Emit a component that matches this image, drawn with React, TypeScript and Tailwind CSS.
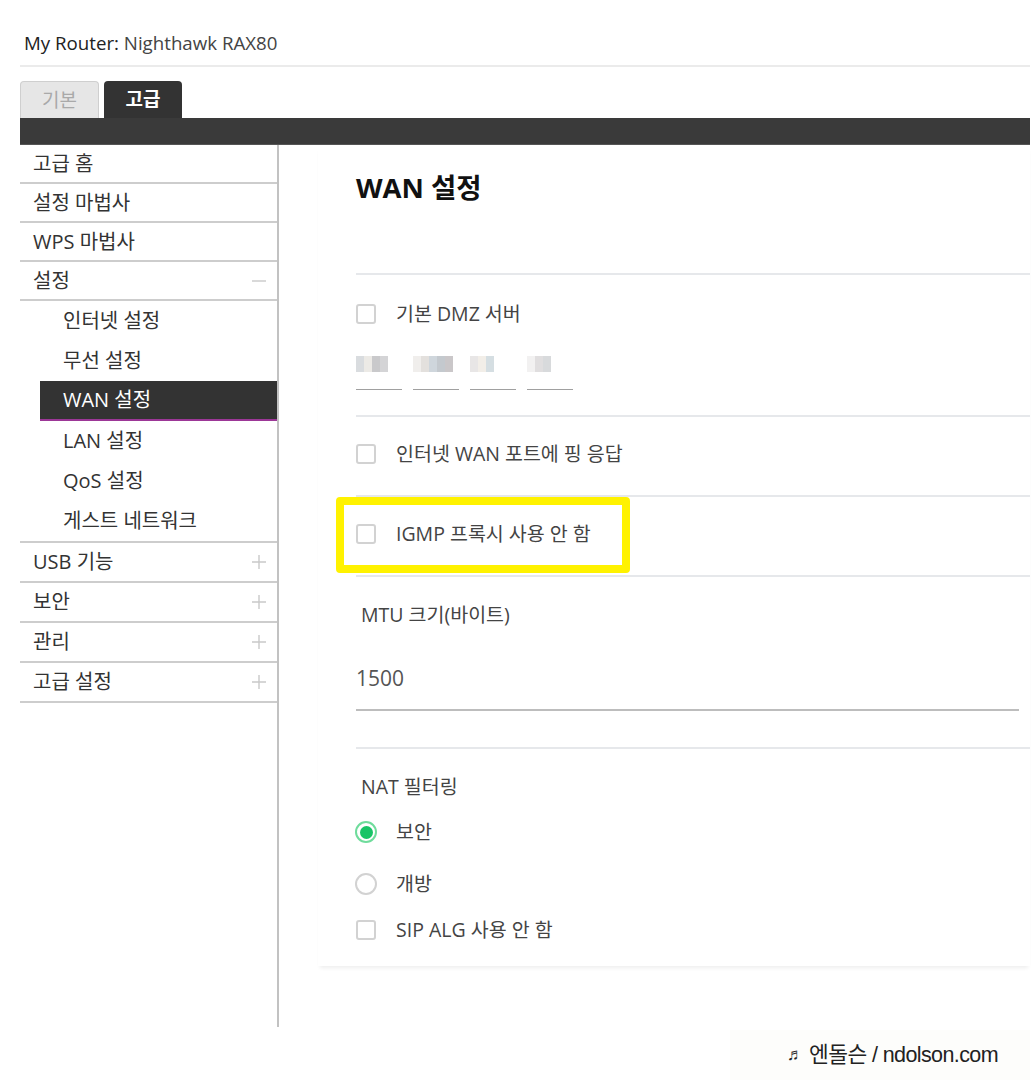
const sans = "font-['Open_Sans','Noto_Sans_CJK_KR',sans-serif]"

const PlusIcon = () => (
  <svg width="16" height="16" viewBox="0 0 16 16">
    <path d="M8 1v14M1 8h14" stroke="#c9c9c9" strokeWidth="1.4" />
  </svg>
)

const MinusIcon = () => (
  <svg width="16" height="16" viewBox="0 0 16 16">
    <path d="M1 8h14" stroke="#c9c9c9" strokeWidth="1.4" />
  </svg>
)

const Checkbox = ({ label }: { label: string }) => (
  <div className="flex h-5 items-center">
    <span className="h-5 w-5 shrink-0 rounded-[3px] border-2 border-[#d2d2d2] bg-white" />
    <span className="ml-5 text-[19.5px] leading-6 text-[#444]">{label}</span>
  </div>
)

const Radio = ({ label, checked }: { label: string; checked?: boolean }) => (
  <div className="flex h-[22px] items-center">
    {checked ? (
      <span className="ml-[-1px] flex h-[22px] w-[22px] items-center justify-center rounded-full border-2 border-[#6fdc9c]">
        <span className="h-[13px] w-[13px] rounded-full bg-[#18c466]" />
      </span>
    ) : (
      <span className="ml-[-1px] h-[22px] w-[22px] rounded-full border-2 border-[#d2d2d2]" />
    )}
    <span className="ml-[19px] text-[19.5px] leading-6 text-[#444]">{label}</span>
  </div>
)

// mosaic blocks standing in for the blurred IP address
const ipBlocks = [
  ['#d9dcdf', '#eceae6', '#c9c9cb', '#d4d4d6'],
  ['#f0eeec', '#e3e0dd', '#cfd6dc', '#c4c9ce', '#cac7c9'],
  ['#e8e6e6', '#f2eee8', '#d5dee2'],
  ['#f2f1f1', '#e0dedf', '#d8dadc'],
]

const topItems = ['고급 홈', '설정 마법사', 'WPS 마법사']
const subItems = ['인터넷 설정', '무선 설정', 'WAN 설정', 'LAN 설정', 'QoS 설정', '게스트 네트워크']
const moreItems = ['USB 기능', '보안', '관리', '고급 설정']

export default function App() {
  return (
    <div className={`relative h-[1080px] w-[1034px] overflow-hidden bg-white pl-5 pr-1 ${sans}`}>
      <div className="border-b-2 border-[#ebebeb] px-1 pb-[11px] pt-[32px] text-[18.7px] leading-[22px]">
        <span className="text-[#222]">My Router:</span>{' '}
        <span className="text-[#444]">Nighthawk RAX80</span>
      </div>

      <div className="mt-[14px] flex h-[37px] items-end gap-[5px]">
        <div className="flex h-[37px] w-[79px] items-center justify-center rounded-t-[4px] border border-b-0 border-[#cfcfcf] bg-[#e6e6e6] text-[19px] text-[#a9a9a9]">
          기본
        </div>
        <div className="flex h-[37px] w-[78px] items-center justify-center rounded-t-[4px] bg-[#333] text-[19px] font-bold text-white">
          고급
        </div>
      </div>
      <div className="h-[27px] border-b border-[#555] bg-[#3a3a3a]" />

      <div className="flex">
        <aside className="h-[882px] w-[259px] shrink-0 border-r-2 border-[#c2c2c2] text-[20px] text-[#333]">
          {topItems.map((item) => (
            <div className="flex h-[39px] items-center border-b-2 border-[#cdcdcd] pl-[13px]" key={item}>
              {item}
            </div>
          ))}
          <div className="flex h-[39px] items-center justify-between border-b-2 border-[#cdcdcd] pl-[13px] pr-[10px]">
            설정
            <MinusIcon />
          </div>
          <div className="border-b-2 border-[#cdcdcd]">
            {subItems.map((item) =>
              item === 'WAN 설정' ? (
                <div
                  className="ml-5 flex h-[40px] items-center border-b-2 border-[#9c3797] bg-[#333] pl-[23px] text-white"
                  key={item}
                >
                  {item}
                </div>
              ) : (
                <div className="ml-5 flex h-[40px] items-center pl-[23px]" key={item}>
                  {item}
                </div>
              ),
            )}
          </div>
          {moreItems.map((item) => (
            <div
              className="flex h-[40px] items-center justify-between border-b-2 border-[#cdcdcd] pl-[13px] pr-[10px]"
              key={item}
            >
              {item}
              <PlusIcon />
            </div>
          ))}
        </aside>

        <main className="flex-1 pl-[39px]">
          <div className="pl-[38px] shadow-[0_4px_4px_-2px_rgba(0,0,0,0.07)]">
            <h1 className="h-[128px] pt-[27px] text-[27.5px] font-bold leading-[32px] text-[#111]">WAN 설정</h1>

            <section className="h-[142px] border-t-2 border-[#e6e8eb] pt-[29px]">
              <Checkbox label="기본 DMZ 서버" />
              <div className="mt-[29px] flex gap-[11px]">
                {ipBlocks.map((blocks, i) => (
                  <div className="h-[37px] w-[46px] border-b border-[#a0a0a0] pt-[3px]" key={i}>
                    <div className="flex">
                      {blocks.map((color, j) => (
                        <span className="h-[16px] w-[8px]" key={j} style={{ backgroundColor: color }} />
                      ))}
                    </div>
                  </div>
                ))}
              </div>
            </section>

            <section className="h-[80px] border-t-2 border-[#e6e8eb] pt-[27px]">
              <Checkbox label="인터넷 WAN 포트에 핑 응답" />
            </section>

            <section className="relative h-[80px] border-t-2 border-[#e6e8eb] pt-[27px]">
              <Checkbox label="IGMP 프록시 사용 안 함" />
              <div className="absolute left-[-20px] top-0 h-[76px] w-[294px] rounded-[4px] border-[8px] border-[#fff200]" />
            </section>

            <section className="h-[172px] border-t-2 border-[#e6e8eb] pt-[26px]">
              <div className="pl-[5px] text-[19.5px] leading-6 text-[#444]">MTU 크기(바이트)</div>
              <div className="mr-[11px] mt-[37px] h-[47px] border-b-2 border-[#bdbdbd]">
                <span className="text-[21px] leading-7 text-[#555]">1500</span>
              </div>
            </section>

            <section className="border-t-2 border-[#e6e8eb] pb-[26px] pt-[26px]">
              <div className="pl-[5px] text-[19.5px] leading-6 text-[#444]">NAT 필터링</div>
              <div className="mt-[22px]">
                <Radio checked label="보안" />
              </div>
              <div className="mt-[30px]">
                <Radio label="개방" />
              </div>
              <div className="mt-[25px]">
                <Checkbox label="SIP ALG 사용 안 함" />
              </div>
            </section>
          </div>
        </main>
      </div>

      <div className="absolute bottom-0 right-1 flex h-[50px] w-[300px] items-center justify-end bg-[#fdfdfb] pr-[32px] font-['Liberation_Sans','Noto_Sans_CJK_KR',sans-serif] text-[#222]">
        <span className="mr-[5px] text-[17px]">♬</span>
        <span className="text-[21.5px] tracking-[-0.6px]">엔돌슨 / ndolson.com</span>
      </div>
    </div>
  )
}
